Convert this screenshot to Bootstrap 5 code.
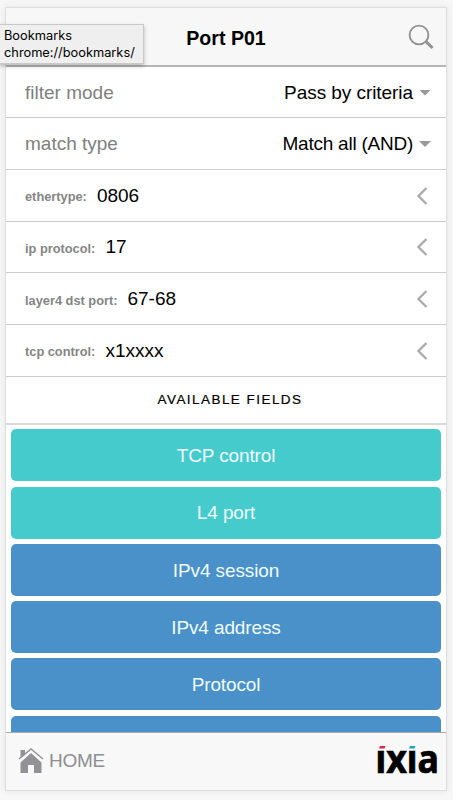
<!DOCTYPE html>
<html lang="en">
<head>
<meta charset="utf-8">
<meta name="viewport" content="width=device-width, initial-scale=1">
<title>Port P01</title>
<link href="https://cdn.jsdelivr.net/npm/bootstrap@5.3.0/dist/css/bootstrap.min.css" rel="stylesheet">
<style>
body{background:#f7f7f7;font-family:"Liberation Sans",Arial,sans-serif;font-size:19px;line-height:24px;color:#000;height:800px;overflow:hidden;padding:7px 6px 0 5px}
.panel{height:784px;border:1px solid #dedede;background:#fff;box-shadow:0 0 7px rgba(0,0,0,.08)}
.top-bar{height:59px;background:#f7f7f7;border-bottom:2px solid #b5b5b5;flex:none}
.top-bar h1{font-size:19.6px;line-height:24px;padding-top:2px}
.search-icon{right:11px}
.field-row{height:51.75px;border:0;border-bottom:1.5px solid #ccc;padding:1px 18px 0 19px;color:#000;flex:none}
.field-row.first-row{height:51px}
.field-name{color:#808080}
.field-value{letter-spacing:-.06px}
.field-value.tight{letter-spacing:-.24px}
.rule-name{color:#858585;font-size:12.8px;font-weight:700;margin-right:10px;padding-top:3px}
.caret{flex:none;width:12px;height:6px;background:#999;clip-path:polygon(0 0,100% 0,50% 100%);margin-left:6px;margin-right:-3px}
.section-title{height:48px;border-bottom:2px solid #d9d9d9;font-size:13.5px;letter-spacing:1.45px;padding-left:8px;-webkit-text-stroke:.2px #000;flex:none}
.fields{padding:4.5px 5px 0 5px;gap:5.3px;overflow:hidden;min-height:0}
.field-btn{height:52px;flex:none;border:0;border-radius:5px;font-size:19px;letter-spacing:-.12px;padding:2px 0 0}
.field-btn,.field-btn:hover{background:#4991c8;color:#f0fbff}
.field-btn.teal,.field-btn.teal:hover{background:#45cbcc}
.bottom-bar{height:58px;background:#f8f8f8;border-top:1px solid #aaa;flex:none;padding:0 8px 2px 12px}
.home-link{color:#8e8e93;font-size:19px;letter-spacing:-.3px;gap:5px}
.brand-logo{overflow:visible}
.hover-tip{position:absolute;left:-1px;top:24px;width:145px;height:40px;background:#efefef;border:1px solid #c9c9c9;box-shadow:0 2px 4px rgba(0,0,0,.25);font:12.8px/16.5px Inter,Roboto,sans-serif;padding:3px 0 0 4px;white-space:nowrap}
</style>
<script src="https://cdn.jsdelivr.net/npm/bootstrap@5.3.0/dist/js/bootstrap.bundle.min.js"></script>
</head>
<body>
<main class="panel d-flex flex-column">
  <header class="top-bar d-flex align-items-center position-relative">
    <h1 class="fw-bold text-center w-100 mb-0">Port P01</h1>
    <svg class="search-icon position-absolute" width="34" height="30" viewBox="0 0 34 30" fill="none" stroke="#929292"><circle cx="18" cy="13" r="9.4" stroke-width="1.9"/><path d="M24.5 19.2 31.5 26" stroke-width="3"/></svg>
  </header>
  <div class="field-row first-row d-flex align-items-center"><span class="field-name">filter mode</span><span class="field-value ms-auto">Pass by criteria</span><i class="caret"></i></div>
  <div class="field-row d-flex align-items-center"><span class="field-name">match type</span><span class="field-value tight ms-auto">Match all (AND)</span><i class="caret"></i></div>
  <div class="field-row d-flex align-items-center"><span class="rule-name">ethertype:</span><span>0806</span><svg class="ms-auto" width="12" height="18" fill="none" stroke="#aaa" stroke-width="2.3"><path d="M10.5 1 2.5 9l8 8"/></svg></div>
  <div class="field-row d-flex align-items-center"><span class="rule-name">ip protocol:</span><span>17</span><svg class="ms-auto" width="12" height="18" fill="none" stroke="#aaa" stroke-width="2.3"><path d="M10.5 1 2.5 9l8 8"/></svg></div>
  <div class="field-row d-flex align-items-center"><span class="rule-name">layer4 dst port:</span><span>67-68</span><svg class="ms-auto" width="12" height="18" fill="none" stroke="#aaa" stroke-width="2.3"><path d="M10.5 1 2.5 9l8 8"/></svg></div>
  <div class="field-row d-flex align-items-center"><span class="rule-name">tcp control:</span><span>x1xxxx</span><svg class="ms-auto" width="12" height="18" fill="none" stroke="#aaa" stroke-width="2.3"><path d="M10.5 1 2.5 9l8 8"/></svg></div>
  <div class="section-title d-flex align-items-center justify-content-center">AVAILABLE FIELDS</div>
  <div class="fields d-flex flex-column flex-grow-1">
    <button class="btn field-btn teal">TCP control</button>
    <button class="btn field-btn teal">L4 port</button>
    <button class="btn field-btn">IPv4 session</button>
    <button class="btn field-btn">IPv4 address</button>
    <button class="btn field-btn">Protocol</button>
    <button class="btn field-btn" aria-label="More fields"></button>
  </div>
  <footer class="bottom-bar d-flex align-items-center justify-content-between">
    <a class="home-link d-flex align-items-center text-decoration-none" href="#">
      <svg width="26" height="26" viewBox="0 0 26 26"><path d="M2.5 10V2H7v5M2.5 14.5 13 5 23.5 14.5V25H16v-8h-6v8H2.5z" fill="#929296"/><path d="M1 11 13 1 25 11" fill="none" stroke="#929296" stroke-width="1.4"/><path d="M2.5 12 13 3.2 23.5 12" fill="none" stroke="#f8f8f8" stroke-width="1.2"/></svg>
      <span>HOME</span>
    </a>
    <svg class="brand-logo" width="62" height="36" viewBox="0 0 62 36"><text x="-.5" y="30.3" textLength="63.5" lengthAdjust="spacingAndGlyphs" font-family="Noto Sans" font-weight="700" font-size="40" stroke="#000" stroke-width=".7">ıxıa</text><path d="M3 5.5 4 3h5.5L8.5 5.5z" fill="#d72b4c"/><path d="M33 5.5 34 3H39.5L38.5 5.5z" fill="#17a9ba"/></svg>
  </footer>
</main>
<div class="hover-tip">Bookmarks<br>chrome://bookmarks/</div>
</body>
</html>
